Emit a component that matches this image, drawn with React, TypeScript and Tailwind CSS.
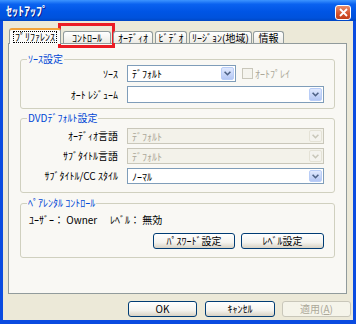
import React from "react";
import clsx from "clsx";

const Chevron = ({ disabled }: { disabled?: boolean }) => (
  <svg width="7" height="5" viewBox="0 0 7 5">
    <path
      d="M0.6 0.7 L3.5 3.7 L6.4 0.7"
      fill="none"
      stroke={disabled ? "#c9c7ba" : "#4d6185"}
      strokeWidth="1.6"
    />
  </svg>
);

function Combo({
  value,
  className,
  disabled,
}: {
  value?: string;
  className: string;
  disabled?: boolean;
}) {
  return (
    <div
      className={clsx(
        "flex h-full items-stretch border p-px",
        className,
        disabled ? "border-[#c9c7ba] bg-[#f3f2ea] text-[#aca899]" : "border-[#7f9db9] bg-white text-black"
      )}
    >
      <span className="flex flex-1 items-center pl-[3px]">{value}</span>
      <span
        className={clsx(
          "flex w-[13px] items-center justify-center rounded-[2px] border",
          disabled
            ? "border-[#e4e2d6] bg-[#f4f3ee]"
            : "border-[#b9cdf7] bg-[linear-gradient(to_bottom,#e0e9fe,#b4c7f4)]"
        )}
      >
        <Chevron disabled={disabled} />
      </span>
    </div>
  );
}

function XpButton({
  children,
  className,
  disabled,
}: {
  children: React.ReactNode;
  className: string;
  disabled?: boolean;
}) {
  return (
    <button
      className={clsx(
        "flex h-[16px] items-center justify-center rounded-[3px] border leading-[12px]",
        className,
        disabled
          ? "border-[#c9c7ba] bg-[#f5f4ea] text-[#aca899]"
          : "border-[#003c74] bg-[linear-gradient(to_bottom,#ffffff,#f4f3ee_60%,#d8d2c4)] text-black"
      )}
    >
      {children}
    </button>
  );
}

function Group({
  title,
  className,
  children,
}: {
  title: string;
  className: string;
  children: React.ReactNode;
}) {
  return (
    <div className={clsx("relative mx-[11px] rounded-[3px] border border-[#d0d0bf]", className)}>
      <span className="absolute -top-[7px] left-[6px] bg-[#f9f8f4] px-px leading-[12px] text-[#0046d5]">
        {title}
      </span>
      {children}
    </div>
  );
}

function Row({ label, children }: { label: string; children: React.ReactNode }) {
  return (
    <div className="flex h-[16px] items-center">
      <span className="w-[97px] text-right leading-[12px]">{label}</span>
      <div className="ml-[9px] flex h-full items-center">{children}</div>
    </div>
  );
}

const tabs = [
  { label: "ｺﾝﾄﾛｰﾙ", cls: "ml-[2px] w-[48px]", marked: true },
  { label: "ｵｰﾃﾞｨｵ", cls: "ml-[2px] w-[40px]" },
  { label: "ﾋﾞﾃﾞｵ", cls: "ml-[2px] w-[32px]" },
  { label: "ﾘｰｼﾞｮﾝ(地域)", cls: "ml-[2px] w-[63px]" },
  { label: "情報", cls: "ml-[1px] w-[31px]" },
];

export default function App() {
  return (
    <div className="flex h-[324px] w-[356px] flex-col bg-[#0a4be0] font-['Noto_Sans_CJK_JP',sans-serif] text-[10px] text-black">
      {/* Title bar */}
      <div className="flex h-[21px] items-start bg-[linear-gradient(to_bottom,#3d95ff_0%,#0a62f0_20%,#0055e5_55%,#0052dc_85%,#0046c4_100%)]">
        <span className="ml-[6px] mt-[3px] text-[12px] font-bold leading-[15px] text-white [text-shadow:1px_1px_0_#0a1e8c]">
          ｾｯﾄｱｯﾌﾟ
        </span>
        <div className="ml-auto mr-[5px] mt-[5px] flex h-[15px] w-[16px] items-center justify-center rounded-[3px] border border-white bg-[linear-gradient(to_bottom,#e98d6d,#d4522b_60%,#c23d17)]">
          <svg width="9" height="9" viewBox="0 0 9 9">
            <path d="M1 1 L8 8 M8 1 L1 8" stroke="white" strokeWidth="1.8" />
          </svg>
        </div>
      </div>

      {/* Dialog body */}
      <div className="mx-[3px] mb-[4px] flex flex-1 flex-col bg-[#ece9d8] pl-[5px] pt-[7px]">
        {/* Tabs */}
        <div className="flex h-[15px] items-end">
          <div className="relative z-10 -mb-px ml-px flex h-[16px] w-[52px] items-center justify-center rounded-t-[3px] border border-b-0 border-[#919b9c] border-t-2 border-t-[#f2a33a] bg-[#fcfcfb]">
            <span className="border border-dotted border-black px-px leading-[10px]">ﾌﾟﾘﾌｧﾚﾝｽ</span>
          </div>
          {tabs.map((t) => (
            <div
              key={t.label}
              className={clsx(
                "relative flex h-[12px] items-center justify-center rounded-t-[3px] border border-b-0 border-[#919b9c] bg-[linear-gradient(to_bottom,#ffffff,#ecebe5)] leading-[10px]",
                t.cls
              )}
            >
              {t.label}
              {t.marked && (
                <div className="absolute -bottom-[5px] -left-[6px] -right-[5px] -top-[9px] border-[3px] border-[#ec1c24]" />
              )}
            </div>
          ))}
        </div>

        {/* Panel */}
        <div className="flex h-[251px] w-[339px] flex-col border border-[#919b9c] bg-[#f9f8f4]">
          <Group title="ｿｰｽ設定" className="mt-[15px] h-[50px]">
            <div className="flex flex-col gap-[4px] pt-[5px]">
              <div className="flex h-[17px] items-center">
                <span className="w-[97px] text-right leading-[12px]">ｿｰｽ</span>
                <div className="ml-[9px] flex h-full items-center">
                  <Combo value="ﾃﾞﾌｫﾙﾄ" className="w-[109px]" />
                  <span className="ml-[6px] h-[11px] w-[11px] border border-[#c9c7ba] bg-[#f5f4ee]" />
                  <span className="ml-[2px] leading-[12px] text-[#aca899]">ｵｰﾄﾌﾟﾚｲ</span>
                </div>
              </div>
              <div className="flex h-[17px] items-center">
                <span className="w-[97px] text-right leading-[12px]">ｵｰﾄ ﾚｼﾞｭｰﾑ</span>
                <div className="ml-[9px] flex h-full items-center">
                  <Combo className="w-[197px]" />
                </div>
              </div>
            </div>
          </Group>

          <Group title="DVDﾃﾞﾌｫﾙﾄ設定" className="mt-[9px] h-[75px]">
            <div className="flex flex-col gap-[4px] pt-[9px]">
              <Row label="ｵｰﾃﾞｨｵ言語">
                <Combo value="ﾃﾞﾌｫﾙﾄ" className="w-[197px]" disabled />
              </Row>
              <Row label="ｻﾌﾞﾀｲﾄﾙ言語">
                <Combo value="ﾃﾞﾌｫﾙﾄ" className="w-[197px]" disabled />
              </Row>
              <Row label="ｻﾌﾞﾀｲﾄﾙ/CC ｽﾀｲﾙ">
                <Combo value="ﾉｰﾏﾙ" className="w-[197px]" />
              </Row>
            </div>
          </Group>

          <Group title="ﾍﾟｱﾚﾝﾀﾙ ｺﾝﾄﾛｰﾙ" className="mt-[10px] h-[55px]">
            <div className="flex pl-[8px] pt-[10px] leading-[12px]">
              <span className="w-[81px]">ﾕｰｻﾞｰ： Owner</span>
              <span>ﾚﾍﾞﾙ： 無効</span>
            </div>
            <div className="mt-[7px] flex gap-[6px] pl-[132px]">
              <XpButton className="w-[82px]">ﾊﾟｽﾜｰﾄﾞ設定</XpButton>
              <XpButton className="w-[83px]">ﾚﾍﾞﾙ設定</XpButton>
            </div>
          </Group>
        </div>

        {/* Dialog buttons */}
        <div className="ml-[120px] mt-[7px] flex">
          <XpButton className="w-[69px]">OK</XpButton>
          <XpButton className="ml-[8px] w-[70px]">ｷｬﾝｾﾙ</XpButton>
          <XpButton className="ml-[7px] w-[69px]" disabled>
            <span>
              適用(<span className="underline">A</span>)
            </span>
          </XpButton>
        </div>
      </div>
    </div>
  );
}
